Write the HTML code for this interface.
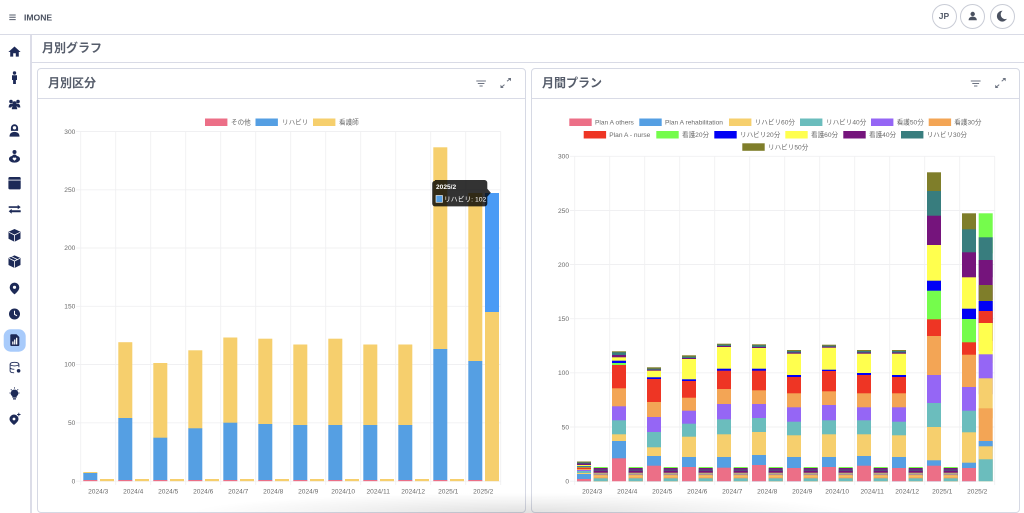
<!DOCTYPE html>
<html lang="ja"><head><meta charset="utf-8"><title>月別グラフ</title>
<style>
html,body{margin:0;padding:0;width:1024px;height:513px;overflow:hidden;background:#fff}
body{position:relative;font-family:"Liberation Sans","Noto Sans CJK JP",sans-serif;color:#555c6b}
.abs,.card,svg.ov{position:absolute}
.hline{position:absolute;background:#d9dbe6;height:1px}
.vline{position:absolute;background:#dcdde8}
.title{position:absolute;font-size:12px;font-weight:700;line-height:16px;color:#565d6b;white-space:nowrap}
.card{background:#fff;border:1px solid #d6d9e4;border-radius:4px;box-sizing:border-box}
.circ{position:absolute;width:25px;height:25px;border:1px solid #c9ccd6;border-radius:50%;box-sizing:border-box;top:3.5px;background:#fff;text-align:center;font-size:8.5px;font-weight:700;line-height:23px;color:#555c6b}
svg text{font-family:"Liberation Sans","Noto Sans CJK JP",sans-serif;font-size:6.6px;fill:#6a6a6a}
.grid line{stroke:#f0f0f2;stroke-width:.9}
.t rect,#lm rect{width:14px}
.s rect,#c7 rect{width:14px;height:40px}
.s g.n rect,#mini rect{width:14px;height:12px}
.a{fill:#ec6f87}.b{fill:#559fe3}.c{fill:#f6cf6d}.d{fill:#6bbdbd}.e{fill:#9566f5}.f{fill:#f3a555}.g{fill:#ee3524}.h{fill:#75fc4c}.i{fill:#0000f5}.j{fill:#ffff4e}.k{fill:#75147c}.l{fill:#387d7e}.m{fill:#7f7e2a}
.lg rect{height:7.5px;width:22.4px}
.tk text{text-anchor:end}
.xl text{text-anchor:middle}
.ic{fill:#1d2a57}
</style></head><body>

<!-- header -->
<svg class="ov" style="left:0;top:0" width="60" height="34" viewBox="0 0 60 34">
<path d="M9.3 15h6.4M9.3 17.3h6.4M9.3 19.6h6.4" stroke="#555c6b" stroke-width="1"/>
<text x="24" y="20.3" style="font-size:8.6px;font-weight:700;fill:#4a5160">IMONE</text>
</svg>
<div class="circ" style="left:931.5px">JP</div>
<div class="circ" style="left:960px"></div>
<div class="circ" style="left:989.5px"></div>
<svg class="ov" style="left:960px;top:3px" width="60" height="26" viewBox="960 3 60 26">
<circle cx="972.7" cy="14" r="2.2" fill="#4a5160"/><path d="M968.6 20.2c0-2.6 1.8-3.6 4.1-3.6s4.1 1 4.1 3.6z" fill="#4a5160"/>
<path d="M1002.6 10.8a5.4 5.4 0 1 0 4.4 8 4.6 4.6 0 0 1-4.4-8z" fill="#4a5160"/>
</svg>
<div class="hline" style="left:0;top:34px;width:1024px;height:1.3px"></div>

<!-- sidebar -->
<div class="vline" style="left:30px;top:35px;width:1.6px;height:478px"></div>
<svg class="ov" style="left:0;top:35px" width="30" height="478" viewBox="0 35 30 478">
<rect x="3.7" y="329.3" width="22" height="22.4" rx="7" fill="#a8cbfb"/>
<g class="ic">
<path d="M14.5 46.5 20.6 52H18.8V56.6H15.8V53.2H13.2V56.6H10.2V52H8.4Z"/>
<circle cx="14.5" cy="73" r="1.7"/><path d="M12 75.3h5v4.7h-1.1v4h-2.8v-4H12z"/>
<circle cx="11" cy="101.5" r="1.8"/><circle cx="18" cy="101.5" r="1.8"/><path d="M8.7 107.5c0-2.6 1-3.8 2.5-3.8h6.6c1.5 0 2.5 1.2 2.5 3.8h-2.5l-.6-1H11.8l-.6 1z"/><circle cx="14.5" cy="103.3" r="2"/><path d="M11.8 109.3c0-2.3 1-3.6 2.7-3.6s2.7 1.3 2.7 3.6z"/>
<path d="M14.5 124.3a3.6 3.6 0 0 1 3.6 3.6v3h-7.2v-3a3.6 3.6 0 0 1 3.6-3.6z"/><circle cx="14.5" cy="127.8" r="1.7" fill="#fff"/><path d="M9.5 136.6c0-3 1.8-4.7 5-4.7s5 1.7 5 4.7z"/>
<circle cx="14.5" cy="152" r="2"/><path d="M14.5 154.5c1.2 0 2 .6 2.3 1.5 2 .3 3.2 1.4 3.2 3 0 2-2.2 3.6-5.5 3.6S9 161 9 159c0-1.6 1.2-2.7 3.2-3 .3-.9 1.1-1.5 2.3-1.5z"/><path d="M14.5 160.8l-1.8-1.7a1.1 1.1 0 0 1 1.8-1.2 1.1 1.1 0 0 1 1.8 1.2z" fill="#fff"/>
<path d="M9.8 177H19.2A1.4 1.4 0 0 1 20.7 178.4V188A1.4 1.4 0 0 1 19.2 189.4H9.8A1.4 1.4 0 0 1 8.4 188V178.4A1.4 1.4 0 0 1 9.8 177Z"/><rect x="8.4" y="179.7" width="12.3" height=".8" fill="#fff"/>
<path d="M8.7 206.3h9V204.9l3 2.2-3 2.2v-1.4h-9zM20.7 210.3h-9V208.9l-3 2.4 3 2.4v-1.4h9z"/>
<path d="M14.5 229 20.5 231.8V238.8L14.5 241.8 8.5 238.8V231.8Z"/><path d="M9 232.3 14.5 235 20 232.3M14.5 235V241.5" fill="none" stroke="#fff" stroke-width=".8"/>
<path d="M14.5 255.4 20.5 258V265L14.5 268 8.5 265V258Z"/><path d="M9 258.3 14.5 261 20 258.3M14.5 261V267.7M11.5 256.7l5.8 2.8" fill="none" stroke="#fff" stroke-width=".8"/>
<path d="M14.5 282.6a4.8 4.8 0 0 1 4.8 4.8c0 2.8-3 5.6-4.8 7-1.8-1.4-4.8-4.2-4.8-7a4.8 4.8 0 0 1 4.8-4.8z"/><circle cx="14.5" cy="287.3" r="1.6" fill="#fff"/>
<circle cx="14.5" cy="314" r="5.5"/><path d="M14.5 310.8V314.3L17 315.8" fill="none" stroke="#fff" stroke-width="1"/>
<path d="M11.3 334.3H16.5L19.3 337V345a1 1 0 0 1-1 1H11.3a1 1 0 0 1-1-1V335.3a1 1 0 0 1 1-1z"/><path d="M12.2 341.5h1.3v3h-1.3zM14.1 339.5h1.3v5h-1.3zM16 337.8h1.3v6.7H16z" fill="#fff"/>
<path d="M14.5 362.3c2.5 0 4.4.8 4.4 1.8v3.2M10.1 364.1c0-1 1.9-1.8 4.4-1.8M10.1 364.1v6.9c0 1 1.7 1.7 4 1.8M10.1 364.1c0 1 1.9 1.8 4.4 1.8s4.4-.8 4.4-1.8M10.1 367.5c0 1 1.7 1.7 4.2 1.8" fill="none" stroke="#1d2a57" stroke-width=".9"/><circle cx="18.6" cy="370.8" r="1.8"/>
<path d="M14.5 389.6a3.7 3.7 0 0 1 2.2 6.7v1.3h-4.4v-1.3a3.7 3.7 0 0 1 2.2-6.7zM13 398.3h3v1.2h-3z"/><path d="M14.5 387.3v1.3M9.4 393h1.3M18.3 393h1.3M10.8 389.3l.9.9M18.2 389.3l-.9.9" stroke="#1d2a57" stroke-width=".8" fill="none"/>
<path d="M14 414.5a4.5 4.5 0 0 1 4.5 4.5c0 2.3-2.7 4.5-4.5 6-1.8-1.5-4.5-3.7-4.5-6a4.5 4.5 0 0 1 4.5-4.5z"/><circle cx="14" cy="419" r="1.4" fill="#fff"/><path d="M18.8 412.8v3.4M17.1 414.5h3.4" stroke="#1d2a57" stroke-width=".9"/>
</g></svg>

<!-- page title -->
<div class="title" style="left:42px;top:40px">月別グラフ</div>
<div class="hline" style="left:31px;top:62px;width:993px;height:1.2px"></div>

<!-- left card -->
<div class="card" style="left:37px;top:68px;width:489px;height:444.5px"></div>
<div class="title" style="left:48px;top:74.5px">月別区分</div>
<div class="hline" style="left:38px;top:97.5px;width:487px;height:1.2px"></div>

<!-- right card -->
<div class="card" style="left:531px;top:68px;width:489px;height:444.5px"></div>
<div class="title" style="left:542px;top:74.5px">月間プラン</div>
<div class="hline" style="left:532px;top:97.5px;width:487px;height:1.2px"></div>

<svg class="ov" style="left:0;top:0" width="1024" height="513" viewBox="0 0 1024 513">
<defs>
<clipPath id="cl"><rect x="0" y="100" width="1024" height="381.3"/></clipPath>
<g id="mini"><rect class="h" y="467"/><rect class="k" y="468"/><rect class="l" y="469.7"/><rect class="k" y="470.5"/><rect class="j" y="472.8"/><rect class="i" y="473.7"/><rect class="c" y="474.3"/><rect class="f" y="475.3"/><rect class="c" y="476.4"/><rect class="f" y="477.2"/><rect class="d" y="478.3"/></g>
<g id="c7"><rect class="m" y="350"/><rect class="l" y="351"/><rect class="k" y="352.5"/><rect class="j" y="353.7"/><rect class="i" y="375"/><rect class="g" y="377"/><rect class="f" y="393.3"/><rect class="e" y="407.3"/><rect class="d" y="421.7"/><rect class="c" y="435.3"/><rect class="b" y="457"/><rect class="a" y="468"/></g>
<g id="lm"><rect class="c" y="479" height="2.3"/></g>
</defs>

<!-- header icons of cards -->
<g fill="none" stroke="#6b7280" stroke-width="1">
<path d="M476.3 81h9.6M477.8 83.5h6.6M479.5 86h3.2M970.8 81h9.8M972.3 83.5h6.8M974 86h3.4"/>
<path d="M507 81.3l3.6-3M501 87.6l3.5-3M1001.7 81.3l3.6-3M995.7 87.6l3.5-3"/>
</g>
<g fill="#6b7280"><path d="M511 78v3.2l-3.2-3.2zM500.5 88v-3.2l3.2 3.2zM1005.7 78v3.2l-3.2-3.2zM995.2 88v-3.2l3.2 3.2z"/></g>

<!-- LEFT CHART -->
<g class="lg">
<rect class="a" x="205" y="118.5"/><text x="231" y="124.7">その他</text>
<rect class="b" x="255.5" y="118.5"/><text x="282" y="124.7">リハビリ</text>
<rect class="c" x="313" y="118.5"/><text x="339" y="124.7">看護師</text>
</g>
<g class="grid">
<line x1="76" x2="500.7" y1="131.5" y2="131.5"/><line x1="76" x2="500.7" y1="189.8" y2="189.8"/><line x1="76" x2="500.7" y1="248" y2="248"/><line x1="76" x2="500.7" y1="306.3" y2="306.3"/><line x1="76" x2="500.7" y1="364.5" y2="364.5"/><line x1="76" x2="500.7" y1="422.8" y2="422.8"/><line x1="76" x2="500.7" y1="481.2" y2="481.2"/>
<line x1="80.7" x2="80.7" y1="131.5" y2="485"/><line x1="115.7" x2="115.7" y1="131.5" y2="485"/><line x1="150.7" x2="150.7" y1="131.5" y2="485"/><line x1="185.7" x2="185.7" y1="131.5" y2="485"/><line x1="220.7" x2="220.7" y1="131.5" y2="485"/><line x1="255.7" x2="255.7" y1="131.5" y2="485"/><line x1="290.7" x2="290.7" y1="131.5" y2="485"/><line x1="325.7" x2="325.7" y1="131.5" y2="485"/><line x1="360.7" x2="360.7" y1="131.5" y2="485"/><line x1="395.7" x2="395.7" y1="131.5" y2="485"/><line x1="430.7" x2="430.7" y1="131.5" y2="485"/><line x1="465.7" x2="465.7" y1="131.5" y2="485"/><line x1="500.7" x2="500.7" y1="131.5" y2="485"/>
</g>
<g class="tk">
<text x="75.3" y="133.8">300</text><text x="75.3" y="192">250</text><text x="75.3" y="250">200</text><text x="75.3" y="308.5">150</text><text x="75.3" y="366.7">100</text><text x="75.3" y="425">50</text><text x="75.3" y="483.5">0</text>
</g>
<g class="xl">
<text x="98.2" y="493.3">2024/3</text><text x="133.2" y="493.3">2024/4</text><text x="168.2" y="493.3">2024/5</text><text x="203.2" y="493.3">2024/6</text><text x="238.2" y="493.3">2024/7</text><text x="273.2" y="493.3">2024/8</text><text x="308.2" y="493.3">2024/9</text><text x="343.2" y="493.3">2024/10</text><text x="378.2" y="493.3">2024/11</text><text x="413.2" y="493.3">2024/12</text><text x="448.2" y="493.3">2025/1</text><text x="483.2" y="493.3">2025/2</text>
</g>
<g class="t" clip-path="url(#cl)">
<g transform="translate(83.3)"><rect class="c" y="472" height="1.5"/><rect class="b" y="473" height="7.5"/><rect class="a" y="480" height="1.3"/></g>
<g transform="translate(118.3)"><rect class="c" y="342.2" height="76"/><rect class="b" y="418" height="62.5"/><rect class="a" y="480" height="1.3"/></g>
<g transform="translate(153.3)"><rect class="c" y="363" height="75"/><rect class="b" y="437.7" height="43"/><rect class="a" y="480" height="1.3"/></g>
<g transform="translate(188.3)"><rect class="c" y="350.3" height="78.5"/><rect class="b" y="428.3" height="52"/><rect class="a" y="480" height="1.3"/></g>
<g transform="translate(223.3)"><rect class="c" y="337.5" height="85.5"/><rect class="b" y="422.7" height="57.5"/><rect class="a" y="480" height="1.3"/></g>
<g transform="translate(258.3)"><rect class="c" y="338.7" height="85.5"/><rect class="b" y="424" height="56.5"/><rect class="a" y="480" height="1.3"/></g>
<g transform="translate(293.3)"><rect class="c" y="344.5" height="81"/><rect class="b" y="425" height="55.5"/><rect class="a" y="480" height="1.3"/></g>
<g transform="translate(328.3)"><rect class="c" y="338.7" height="86.5"/><rect class="b" y="425" height="55.5"/><rect class="a" y="480" height="1.3"/></g>
<g transform="translate(363.3)"><rect class="c" y="344.5" height="81"/><rect class="b" y="425" height="55.5"/><rect class="a" y="480" height="1.3"/></g>
<g transform="translate(398.3)"><rect class="c" y="344.5" height="81"/><rect class="b" y="425" height="55.5"/><rect class="a" y="480" height="1.3"/></g>
<g transform="translate(433.3)"><rect class="c" y="147.3" height="202"/><rect class="b" y="349" height="131.5"/><rect class="a" y="480" height="1.3"/></g>
<g transform="translate(468.3)"><rect class="c" y="193" height="168.5"/><rect class="b" y="361" height="119.5"/><rect class="a" y="480" height="1.3"/></g>
<use href="#lm" x="100"/><use href="#lm" x="135"/><use href="#lm" x="170"/><use href="#lm" x="205"/><use href="#lm" x="240"/><use href="#lm" x="275"/><use href="#lm" x="310"/><use href="#lm" x="345"/><use href="#lm" x="380"/><use href="#lm" x="415"/><use href="#lm" x="450"/>
<g transform="translate(485)"><rect style="fill:#4a9bf5" y="193" height="119.5"/><rect class="c" y="312" height="169.3"/></g>
</g>
<!-- tooltip -->
<path d="M435 180h49.5a2.8 2.8 0 0 1 2.8 2.8v6l3.5 4-3.5 4v6.8a2.8 2.8 0 0 1-2.8 2.8H435a2.8 2.8 0 0 1-2.8-2.8v-20a2.8 2.8 0 0 1 2.8-2.8z" fill="#000" fill-opacity=".8"/>
<text x="436" y="189" style="fill:#fff;font-weight:700;font-size:6.6px">2025/2</text>
<rect x="436" y="195.5" width="6.5" height="6.8" fill="#559fe3" stroke="#fff" stroke-width=".6"/>
<text x="444" y="201.5" style="fill:#fff;font-size:6.8px">リハビリ: 102</text>

<!-- RIGHT CHART -->
<g class="lg">
<rect class="a" x="569.3" y="118.5"/><text x="595" y="124.3">Plan A others</text>
<rect class="b" x="639.3" y="118.5"/><text x="665" y="124.3">Plan A rehabilitation</text>
<rect class="c" x="729" y="118.5"/><text x="754.7" y="124.3">リハビリ60分</text>
<rect class="d" x="800" y="118.5"/><text x="826" y="124.3">リハビリ40分</text>
<rect class="e" x="871" y="118.5"/><text x="896.7" y="124.3">看護50分</text>
<rect class="f" x="928.7" y="118.5"/><text x="954.3" y="124.3">看護30分</text>
<rect class="g" x="583.7" y="131"/><text x="609.3" y="136.9">Plan A - nurse</text>
<rect class="h" x="656.3" y="131"/><text x="682" y="136.9">看護20分</text>
<rect class="i" x="714.3" y="131"/><text x="740" y="136.9">リハビリ20分</text>
<rect class="j" x="785.3" y="131"/><text x="811" y="136.9">看護60分</text>
<rect class="k" x="843.3" y="131"/><text x="869" y="136.9">看護40分</text>
<rect class="l" x="901" y="131"/><text x="926.7" y="136.9">リハビリ30分</text>
<rect class="m" x="742.3" y="143.3"/><text x="768" y="149.3">リハビリ50分</text>
</g>
<g class="grid">
<line x1="570" x2="994.7" y1="156.3" y2="156.3"/><line x1="570" x2="994.7" y1="210.5" y2="210.5"/><line x1="570" x2="994.7" y1="264.5" y2="264.5"/><line x1="570" x2="994.7" y1="318.7" y2="318.7"/><line x1="570" x2="994.7" y1="372.8" y2="372.8"/><line x1="570" x2="994.7" y1="427" y2="427"/><line x1="570" x2="994.7" y1="481.2" y2="481.2"/>
<line x1="574.7" x2="574.7" y1="156.3" y2="485"/><line x1="609.7" x2="609.7" y1="156.3" y2="485"/><line x1="644.7" x2="644.7" y1="156.3" y2="485"/><line x1="679.7" x2="679.7" y1="156.3" y2="485"/><line x1="714.7" x2="714.7" y1="156.3" y2="485"/><line x1="749.7" x2="749.7" y1="156.3" y2="485"/><line x1="784.7" x2="784.7" y1="156.3" y2="485"/><line x1="819.7" x2="819.7" y1="156.3" y2="485"/><line x1="854.7" x2="854.7" y1="156.3" y2="485"/><line x1="889.7" x2="889.7" y1="156.3" y2="485"/><line x1="924.7" x2="924.7" y1="156.3" y2="485"/><line x1="959.7" x2="959.7" y1="156.3" y2="485"/><line x1="994.7" x2="994.7" y1="156.3" y2="485"/>
</g>
<g class="tk">
<text x="569" y="158.6">300</text><text x="569" y="212.8">250</text><text x="569" y="266.8">200</text><text x="569" y="321">150</text><text x="569" y="375">100</text><text x="569" y="429.3">50</text><text x="569" y="483.5">0</text>
</g>
<g class="xl">
<text x="592.2" y="493.3">2024/3</text><text x="627.2" y="493.3">2024/4</text><text x="662.2" y="493.3">2024/5</text><text x="697.2" y="493.3">2024/6</text><text x="732.2" y="493.3">2024/7</text><text x="767.2" y="493.3">2024/8</text><text x="802.2" y="493.3">2024/9</text><text x="837.2" y="493.3">2024/10</text><text x="872.2" y="493.3">2024/11</text><text x="907.2" y="493.3">2024/12</text><text x="942.2" y="493.3">2025/1</text><text x="977.2" y="493.3">2025/2</text>
</g>
<g class="s" clip-path="url(#cl)">
<g class="n" transform="translate(577)"><rect class="m" y="461.5"/><rect class="l" y="462.5"/><rect class="k" y="463.5"/><rect class="j" y="465"/><rect class="i" y="466"/><rect class="h" y="466.5"/><rect class="g" y="467.5"/><rect class="f" y="469"/><rect class="e" y="470"/><rect class="d" y="471"/><rect class="c" y="473"/><rect class="b" y="474"/><rect class="a" y="479"/></g>
<g transform="translate(612)"><rect class="m" y="351.3"/><rect class="l" y="352.3"/><rect class="k" y="355"/><rect class="j" y="357.3"/><rect class="i" y="360.7"/><rect class="h" y="363"/><rect class="g" y="365"/><rect class="f" y="388.3"/><rect class="e" y="406.3"/><rect class="d" y="420.3"/><rect class="c" y="434.3"/><rect class="b" y="441"/><rect class="a" y="458.3"/></g>
<g transform="translate(647)"><rect class="m" y="367.3"/><rect class="l" y="368.7"/><rect class="k" y="369.7"/><rect class="j" y="370.7"/><rect class="i" y="377.3"/><rect class="g" y="379"/><rect class="f" y="402"/><rect class="e" y="417"/><rect class="d" y="432"/><rect class="c" y="447.3"/><rect class="b" y="456"/><rect class="a" y="465.7"/></g>
<g transform="translate(682)"><rect class="m" y="355.3"/><rect class="l" y="356.7"/><rect class="k" y="358"/><rect class="j" y="359"/><rect class="i" y="379.3"/><rect class="g" y="381"/><rect class="f" y="397.7"/><rect class="e" y="410.7"/><rect class="d" y="423.7"/><rect class="c" y="436.7"/><rect class="b" y="457"/><rect class="a" y="467"/></g>
<g transform="translate(717)"><rect class="m" y="343.7"/><rect class="l" y="344.7"/><rect class="k" y="346"/><rect class="j" y="347"/><rect class="i" y="368.7"/><rect class="g" y="370.7"/><rect class="f" y="389"/><rect class="e" y="404"/><rect class="d" y="419.3"/><rect class="c" y="434.3"/><rect class="b" y="457"/><rect class="a" y="467.7"/></g>
<g transform="translate(752)"><rect class="m" y="344.3"/><rect class="l" y="345.3"/><rect class="k" y="347"/><rect class="j" y="348"/><rect class="i" y="368.7"/><rect class="g" y="370.7"/><rect class="f" y="390.3"/><rect class="e" y="404"/><rect class="d" y="418"/><rect class="c" y="432"/><rect class="b" y="455"/><rect class="a" y="465"/></g>
<use href="#c7" x="787"/>
<g transform="translate(822)"><rect class="m" y="344.7"/><rect class="l" y="345.7"/><rect class="k" y="346.7"/><rect class="j" y="347.7"/><rect class="i" y="369.7"/><rect class="g" y="371"/><rect class="f" y="391.3"/><rect class="e" y="405"/><rect class="d" y="420.3"/><rect class="c" y="434.3"/><rect class="b" y="457"/><rect class="a" y="467"/></g>
<g transform="translate(857)"><rect class="m" y="350"/><rect class="l" y="351"/><rect class="k" y="352.5"/><rect class="j" y="353.7"/><rect class="i" y="373"/><rect class="g" y="375"/><rect class="f" y="393.3"/><rect class="e" y="407.3"/><rect class="d" y="420.3"/><rect class="c" y="434.3"/><rect class="b" y="456"/><rect class="a" y="465.7"/></g>
<use href="#c7" x="892"/>
<g transform="translate(927)"><rect class="m" y="172.3"/><rect class="l" y="191"/><rect class="k" y="215.7"/><rect class="j" y="245"/><rect class="i" y="280.7"/><rect class="h" y="290.7"/><rect class="g" y="319.3"/><rect class="f" y="336"/><rect class="e" y="375"/><rect class="d" y="403"/><rect class="c" y="427"/><rect class="b" y="460.3"/><rect class="a" y="465.7"/></g>
<g transform="translate(962)"><rect class="m" y="213.3"/><rect class="l" y="229.3"/><rect class="k" y="252.3"/><rect class="j" y="277.3"/><rect class="i" y="308.7"/><rect class="h" y="319"/><rect class="g" y="342.3"/><rect class="f" y="354.7"/><rect class="e" y="387"/><rect class="d" y="410.7"/><rect class="c" y="432.3"/><rect class="b" y="462.7"/><rect class="a" y="468"/></g>
<g transform="translate(978.7)"><rect class="h" y="213.3"/><rect class="l" y="237.3"/><rect class="k" y="260"/><rect class="m" y="285"/><rect class="i" y="301"/><rect class="g" y="311"/><rect class="j" y="323"/><rect class="e" y="354.3"/><rect class="c" y="378.3"/><rect class="f" y="408.3"/><rect class="b" y="441"/><rect class="c" y="446.3"/><rect class="d" y="459.3"/></g>
<use href="#mini" x="593.7"/><use href="#mini" x="628.7"/><use href="#mini" x="663.7"/><use href="#mini" x="698.7"/><use href="#mini" x="733.7"/><use href="#mini" x="768.7"/><use href="#mini" x="803.7"/><use href="#mini" x="838.7"/><use href="#mini" x="873.7"/><use href="#mini" x="908.7"/><use href="#mini" x="943.7"/>
</g>
</svg>

<!-- bottom window shadow -->
<div class="abs" style="left:190px;top:493px;width:660px;height:20px;background:radial-gradient(ellipse 50% 100% at 50% 100%,rgba(0,0,0,.12),rgba(0,0,0,.05) 55%,rgba(0,0,0,0) 100%)"></div>
</body></html>
